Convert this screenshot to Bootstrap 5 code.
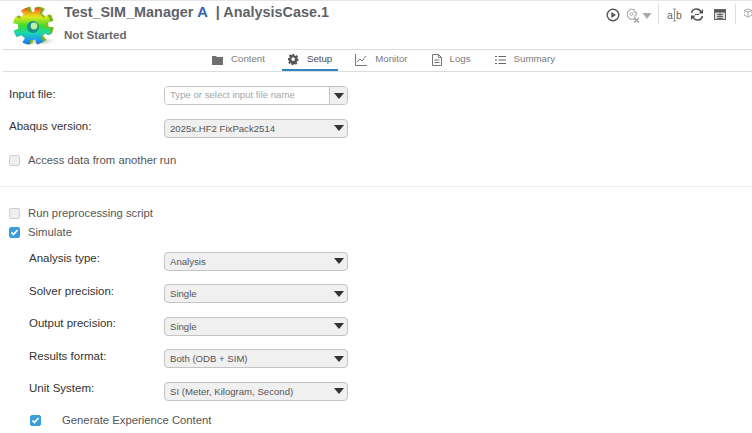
<!DOCTYPE html>
<html lang="en">
<head>
<meta charset="utf-8">
<title>AnalysisCase.1</title>
<link href="https://cdn.jsdelivr.net/npm/bootstrap@5.3.0/dist/css/bootstrap.min.css" rel="stylesheet">
<style>
html,body{height:433px;overflow:hidden;background:#fff}
body{font-family:"Liberation Sans",Arial,sans-serif;color:#444;width:752px;border-top:1px solid #e6e6e6}
.app-head{height:49px;margin-left:3px;border-bottom:1px solid #dcdcdc}
.logo-box{width:61px;padding-left:10px;padding-top:2px}
.app-title{font-size:14.4px;font-weight:700;color:#5f6368;line-height:20px;margin-top:1px;white-space:pre}
.app-title b{color:#2f62b5;font-size:14.6px}
.app-sub{font-size:11.6px;font-weight:700;color:#6a6a6a;line-height:14px;margin-top:6px}
.tool-strip{padding-top:3px;height:28px}
.tool-ico{margin-top:4px;flex:none}
.tool-sep{width:1px;height:20px;background:#dcdcdc;flex:none}
.tab-strip{height:22px;margin-left:3px;border-bottom:1px solid #dcdcdc;padding-left:203px;gap:11px}
.tab-item{height:21px;padding:0 6px 2px;font-size:9.7px;color:#7b7b7b;gap:8px;display:flex;align-items:center}
.tab-item.on{color:#4c4c4c;box-shadow:inset 0 -2px 0 #2f86c1}
.form-area{padding:14px 0 0 9px;width:348px;font-size:11.5px}
.fld-row{height:19px;margin-bottom:13.5px;display:flex;align-items:center}
.fld-row label{width:155px;color:#333;position:relative;top:-1px}
.sub-area .fld-row label{width:135px;top:-2px}
.sub-area{padding-left:20px}
.form-select.pick{height:19px;min-height:19px;padding:0 20px 0 5px;font-size:9.6px;line-height:17px;border:1px solid #c4c4c4;border-radius:4px;color:#555;background-color:#f0f0f0;font-family:inherit;flex:1;width:auto;
background-size:12px 8px;background-position:right 2px center;
background-image:url("data:image/svg+xml,%3Csvg xmlns='http://www.w3.org/2000/svg' viewBox='0 0 12 8'%3E%3Cpath fill='%23333' d='M1 1h10L6 7z'/%3E%3C/svg%3E")}
.combo{flex:1;height:19px;display:flex;border:1px solid #c4c4c4;border-radius:4px;overflow:hidden}
.combo input{flex:1;min-width:0;border:0;padding:0 5px;font-size:9.6px;outline:0;background:#fff;font-family:inherit;color:#555}
.combo input::placeholder{color:#a6a6a6;opacity:1}
.combo .drop{width:18px;border:0;border-left:1px solid #c4c4c4;background:#f0f0f0;padding:0;display:flex;align-items:center;justify-content:center}
.chk-row{display:flex;align-items:center;gap:8px;height:11px;color:#555;font-size:11.3px;margin:0}
.chk-box{width:11px;height:11px;border:1px solid #cfcfcf;border-radius:2px;background:#efefef;flex:none;display:flex}
.chk-box.yes{background:#3c9ddc;border-color:#3c9ddc}
.rule{height:1px;background:#f0f0f0;margin:20px 0 21px 0;width:752px}
</style>
</head>
<body>
<header class="app-head d-flex">
  <div class="logo-box">
    <svg width="46" height="44" viewBox="0 0 46 44">
      <defs>
        <linearGradient id="rb" gradientUnits="userSpaceOnUse" x1="0" y1="3" x2="0" y2="44">
          <stop offset="0" stop-color="#e6201c"/><stop offset=".14" stop-color="#f49a1a"/><stop offset=".27" stop-color="#dfe81e"/><stop offset=".48" stop-color="#3fdc2a"/><stop offset=".66" stop-color="#18d8b0"/><stop offset=".82" stop-color="#1c9cf0"/><stop offset="1" stop-color="#1b4fe0"/>
        </linearGradient>
        <radialGradient id="sh"><stop offset="0" stop-color="#999"/><stop offset="1" stop-color="#fff" stop-opacity="0"/></radialGradient>
      </defs>
      <ellipse cx="27" cy="38" rx="18" ry="5" fill="url(#sh)"/>
      <g transform="translate(3 -1)" fill="#8fb82a" stroke="#8fb82a">
        <circle cx="19" cy="23" r="13"/>
        <circle cx="19" cy="23" r="16" fill="none" stroke-width="6" stroke-dasharray="6.300 6.270" stroke-dashoffset="-2"/>
      </g>
      <g transform="translate(1.500 -.5)" stroke="#6fae22">
        <circle cx="19" cy="23" r="16" fill="none" stroke-width="6" stroke-dasharray="6.300 6.270" stroke-dashoffset="-2"/>
      </g>
      <circle cx="19" cy="23" r="14" fill="url(#rb)"/>
      <circle cx="19" cy="23" r="16" fill="none" stroke="url(#rb)" stroke-width="6" stroke-dasharray="6.300 6.270" stroke-dashoffset="-2"/>
      <circle cx="20" cy="24" r="6" fill="#17908c"/>
      <circle cx="21" cy="23" r="3.400" fill="#bdf0a0"/>
    </svg>
  </div>
  <div class="flex-grow-1">
    <div class="app-title">Test_SIM_Manager <b>A</b>  | AnalysisCase.1</div>
    <div class="app-sub">Not Started</div>
  </div>
  <div class="tool-strip d-flex align-items-start">
    <svg width="14" height="14" viewBox="0 0 14 14" class="tool-ico" style="margin-right:6px"><circle cx="7" cy="7" r="5.800" fill="none" stroke="#555" stroke-width="1.400"/><path d="M5.300 4v6l4.700-3z" fill="#555"/></svg>
    <svg width="14" height="15" viewBox="0 0 14 15" class="tool-ico"><path fill="none" stroke="#b0b0b0" stroke-width="1.200" d="M5 1l3 .6.4 2 2 1-.4 2.500-1 1v3H4L1.500 8.500V4z"/><circle cx="5.500" cy="6" r="1.500" fill="none" stroke="#b0b0b0"/><path stroke="#999" stroke-width="1.200" d="M8 10l5 4.500M13 10l-5 4.500"/></svg>
    <svg width="10" height="8" viewBox="0 0 10 8" style="margin:8px 6px 0 2px;flex:none"><path d="M.5 1h9L5 7z" fill="#aaa"/></svg>
    <span class="tool-sep" style="margin-right:8px"></span>
    <svg width="15" height="15" viewBox="0 0 15 15" class="tool-ico" style="margin-right:8px"><text x="0" y="10.500" font-size="10.500" font-family="Liberation Sans" fill="#666">a</text><text x="9" y="10.500" font-size="10.500" font-family="Liberation Sans" fill="#666">b</text><path stroke="#999" fill="none" d="M7.500 1v12M6 1h3M6 13h3"/></svg>
    <svg width="14" height="13" viewBox="0 0 14 13" class="tool-ico" style="margin-right:10px"><path fill="none" stroke="#555" stroke-width="1.500" d="M1.500 5a5 5 0 0 1 9.500-1M12.500 8a5 5 0 0 1-9.500 1"/><path fill="#555" d="M13 1v4.500H8.500zM1 12V7.500h4.500z"/><path stroke="#555" d="M5 6.500h4"/></svg>
    <svg width="12" height="11" viewBox="0 0 12 11" class="tool-ico" style="margin:5px 9px 0 0"><rect x=".5" y=".5" width="11" height="10" fill="#d8d8d8" stroke="#666"/><rect x="1" y="1" width="10" height="2.500" fill="#555"/><path stroke="#666" d="M3 5.500h6M3 7.500h6M3 9.500h6M6 4v6"/></svg>
    <span class="tool-sep" style="margin-right:8px"></span>
    <svg width="8" height="10" viewBox="0 0 8 10" class="tool-ico"><path fill="none" stroke="#aaa" d="M0 2.500L4 1l4 1.500V7L4 9 0 7zM0 2.500L4 4l4-1.500M4 4v5"/></svg>
  </div>
</header>

<nav class="tab-strip d-flex">
  <div class="tab-item">
    <svg width="11" height="10" viewBox="0 0 11 10"><path fill="#6f6f6f" d="M0 1h4l1 1h6v8H0z"/></svg><span>Content</span>
  </div>
  <div class="tab-item on">
    <svg width="11" height="11" viewBox="0 0 16 16"><path fill="#555" fill-rule="evenodd" d="M6.500 0h3l.4 2.300 1.500.7 2-1.300 2.100 2.100-1.300 2 .6 1.500L16 7.700v3l-2.200.4-.6 1.400 1.300 2-2.100 2-2-1.200-1.500.6-.4 1.100h-3l-.4-2.200-1.500-.6-2 1.300L.500 13.400l1.300-2-.6-1.400L0 9.500v-3l2.200-.4.600-1.500-1.300-2L3.600.500l2 1.300 1.500-.6zM8 5.200a2.800 2.800 0 1 0 0 5.600 2.800 2.800 0 0 0 0-5.600z" transform="scale(.94)"/></svg><span>Setup</span>
  </div>
  <div class="tab-item">
    <svg width="12" height="12" viewBox="0 0 12 12"><path fill="none" stroke="#777" d="M.5 0v11.500H12M2 8l3-3 2 2 4-5"/></svg><span>Monitor</span>
  </div>
  <div class="tab-item" style="margin-left:1px">
    <svg width="10" height="12" viewBox="0 0 10 12"><path fill="none" stroke="#777" d="M.5.500h6l3 3v8h-9zM6.500.500v3h3M2.500 6h5M2.500 8.500h5"/></svg><span>Logs</span>
  </div>
  <div class="tab-item" style="margin-left:1px">
    <svg width="11" height="10" viewBox="0 0 11 10"><path stroke="#666" stroke-width="1.200" d="M0 1.500h2M3.500 1.500H11M0 5h2M3.500 5H11M0 8.500h2M3.500 8.500H11"/></svg><span>Summary</span>
  </div>
</nav>

<main>
  <div class="form-area">
    <div class="fld-row">
      <label for="inp">Input file:</label>
      <div class="combo">
        <input id="inp" placeholder="Type or select input file name">
        <button class="drop" type="button" aria-label="Open"><svg width="12" height="8" viewBox="0 0 12 8"><path fill="#333" d="M1 1h10L6 7z"/></svg></button>
      </div>
    </div>
    <div class="fld-row">
      <label>Abaqus version:</label>
      <select class="form-select pick"><option>2025x.HF2 FixPack2514</option></select>
    </div>
    <div class="chk-row" style="margin-top:17px"><span class="chk-box"></span><span>Access data from another run</span></div>
  </div>
  <div class="rule"></div>
  <div class="form-area" style="padding-top:0">
    <div class="chk-row"><span class="chk-box"></span><span>Run preprocessing script</span></div>
    <div class="chk-row" style="margin-top:8px"><span class="chk-box yes"><svg width="9" height="9" viewBox="0 0 9 9"><path d="M1.500 4.500l2 2 4-4.500" fill="none" stroke="#fff" stroke-width="1.800"/></svg></span><span>Simulate</span></div>
    <div class="sub-area" style="margin-top:14px">
      <div class="fld-row"><label>Analysis type:</label><select class="form-select pick"><option>Analysis</option></select></div>
      <div class="fld-row"><label>Solver precision:</label><select class="form-select pick"><option>Single</option></select></div>
      <div class="fld-row"><label>Output precision:</label><select class="form-select pick"><option>Single</option></select></div>
      <div class="fld-row"><label>Results format:</label><select class="form-select pick"><option>Both (ODB + SIM)</option></select></div>
      <div class="fld-row"><label>Unit System:</label><select class="form-select pick"><option>SI (Meter, Kilogram, Second)</option></select></div>
      <div class="chk-row" style="gap:21px;margin-top:14px;margin-left:1px"><span class="chk-box yes"><svg width="9" height="9" viewBox="0 0 9 9"><path d="M1.500 4.500l2 2 4-4.500" fill="none" stroke="#fff" stroke-width="1.800"/></svg></span><span>Generate Experience Content</span></div>
    </div>
  </div>
</main>
<script src="https://cdn.jsdelivr.net/npm/bootstrap@5.3.0/dist/js/bootstrap.bundle.min.js"></script>
</body>
</html>
